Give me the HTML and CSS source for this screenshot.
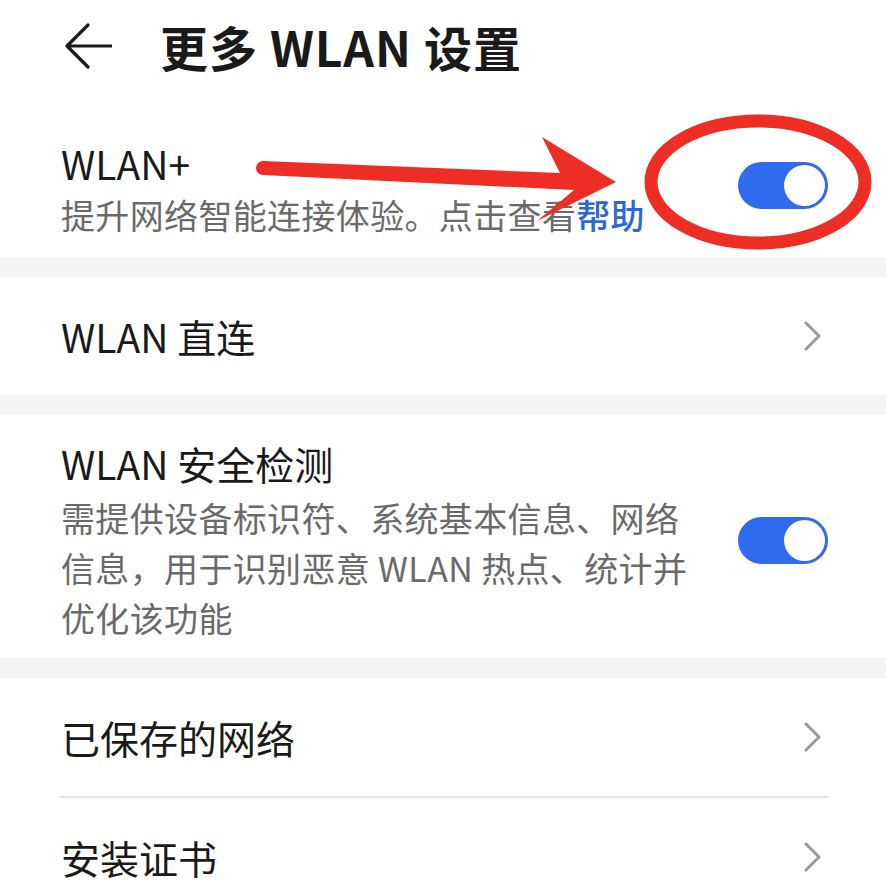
FILE: index.html
```html
<!DOCTYPE html>
<html lang="zh-CN">
<head>
<meta charset="utf-8">
<title>更多 WLAN 设置</title>
<link rel="stylesheet" href="styles.css">
</head>
<body>
<div class="page">
  <section class="group group-first">
    <header class="header">
      <svg class="back" width="48" height="46" viewBox="0 0 48 46">
        <path d="M24 2 L3 23 L24 44 M3 23 L48 23" fill="none" stroke="#1a1a1a" stroke-width="3.2" stroke-linecap="round" stroke-linejoin="round"/>
      </svg>
      <h1 class="title">更多 WLAN 设置</h1>
    </header>
    <div class="row row-plus">
      <div class="text">
        <div class="label">WLAN+</div>
        <div class="desc">提升网络智能连接体验。点击查看<span class="link">帮助</span></div>
      </div>
      <div class="trail"><span class="toggle"><span class="knob"></span></span></div>
    </div>
  </section>

  <section class="group">
    <div class="row row-simple">
      <div class="label">WLAN 直连</div>
      <div class="trail"><svg class="chev" width="18" height="30" viewBox="0 0 18 30"><path d="M2 2 L15 15 L2 28" fill="none" stroke="#9a9a9a" stroke-width="3" stroke-linecap="round" stroke-linejoin="round"/></svg></div>
    </div>
  </section>

  <section class="group">
    <div class="row row-security">
      <div class="text">
        <div class="label">WLAN 安全检测</div>
        <div class="desc desc-multi">需提供设备标识符、系统基本信息、网络<br>信息，用于识别恶意 WLAN 热点、统计并<br>优化该功能</div>
      </div>
      <div class="trail"><span class="toggle"><span class="knob"></span></span></div>
    </div>
  </section>

  <section class="group group-last">
    <div class="row row-simple">
      <div class="label">已保存的网络</div>
      <div class="trail"><svg class="chev" width="18" height="30" viewBox="0 0 18 30"><path d="M2 2 L15 15 L2 28" fill="none" stroke="#9a9a9a" stroke-width="3" stroke-linecap="round" stroke-linejoin="round"/></svg></div>
    </div>
    <div class="divider"></div>
    <div class="row row-simple">
      <div class="label">安装证书</div>
      <div class="trail"><svg class="chev" width="18" height="30" viewBox="0 0 18 30"><path d="M2 2 L15 15 L2 28" fill="none" stroke="#9a9a9a" stroke-width="3" stroke-linecap="round" stroke-linejoin="round"/></svg></div>
    </div>
  </section>

  <svg class="annot" width="886" height="892" viewBox="0 0 886 892">
    <circle cx="263" cy="168" r="7" fill="#ee2d24"/>
    <polygon points="263,161 560,173 542,137 616,182 537,221 574,190 263,175" fill="#ee2d24"/>
    <ellipse cx="758" cy="182" rx="107" ry="61" fill="none" stroke="#ee2d24" stroke-width="13"/>
  </svg>
</div>
</body>
</html>
```

FILE: styles.css
```css
html, body {
  margin: 0;
  padding: 0;
}
body {
  background: #f4f4f4;
  font-family: "Noto Sans CJK SC", "Noto Sans", sans-serif;
  color: #1a1a1a;
}
.page {
  position: relative;
  width: 886px;
  height: 892px;
  overflow: hidden;
  display: flex;
  flex-direction: column;
  gap: 20px;
}
.group {
  background: #ffffff;
  flex-shrink: 0;
}
.group-first {
  height: 257px;
}
.group-last {
  flex: 1 0 auto;
}
.header {
  height: 92px;
  display: flex;
  align-items: center;
  padding-left: 64px;
  gap: 48px;
}
.back {
  display: block;
}
.title {
  margin: 0;
  font-size: 48px;
  font-weight: 700;
  letter-spacing: 1px;
  line-height: 60px;
  color: #1a1a1a;
}
.row {
  display: flex;
  align-items: center;
  padding: 0 58px 0 61px;
}
.text {
  flex: 1;
  display: flex;
  flex-direction: column;
}
.label {
  font-size: 39px;
  line-height: 50px;
  color: #1a1a1a;
}
.desc {
  font-size: 34px;
  letter-spacing: 0.35px;
  line-height: 50px;
  color: #6a6a6a;
}
.link {
  color: #2d67d6;
  font-weight: 500;
}
.row-plus {
  padding-top: 46px;
}
.row-plus .desc {
  margin-top: 2px;
}
.row-simple {
  height: 118px;
  justify-content: space-between;
}
.row-security {
  padding-top: 23px;
  padding-bottom: 15px;
}
.desc-multi {
  margin-top: 5px;
}
.trail {
  width: 90px;
  display: flex;
  justify-content: flex-end;
  align-items: center;
}
.chev {
  display: block;
  margin-right: 6px;
}
.toggle {
  width: 90px;
  height: 47px;
  border-radius: 24px;
  background: #2f6bed;
  display: flex;
  justify-content: flex-end;
  align-items: center;
  padding-right: 3px;
  box-sizing: border-box;
}
.row-plus .toggle {
  margin-top: -8px;
}
.knob {
  width: 41px;
  height: 41px;
  border-radius: 50%;
  background: #ffffff;
}
.divider {
  height: 2px;
  background: #e6e6e6;
  margin: 0 58px 0 60px;
}
.annot {
  position: absolute;
  left: 0;
  top: 0;
  pointer-events: none;
}
```
